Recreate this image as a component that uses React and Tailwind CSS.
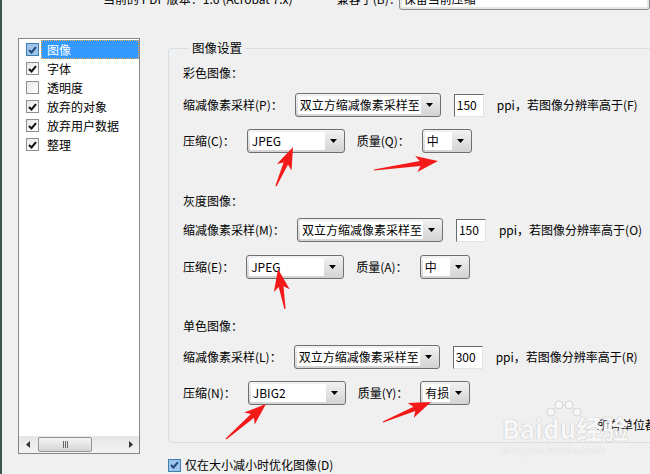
import React from 'react';

const font = "font-['Noto_Sans_CJK_SC','Liberation_Sans',sans-serif]";

const Tri = () => (
  <svg width="7" height="4" viewBox="0 0 7 4">
    <polygon points="0,0 7,0 3.5,4" fill="#000" />
  </svg>
);

const Select = ({ w, text }) => (
  <div className={`flex h-[24px] shrink-0 rounded-[3px] border border-[#707070] bg-linear-to-b from-[#f2f2f2] to-[#d3d3d3] p-[2px] ${w}`}>
    <div className="flex flex-1 items-center overflow-hidden whitespace-nowrap bg-white pl-[2px]">{text}</div>
    <div className="flex w-[17px] items-center justify-center">
      <Tri />
    </div>
  </div>
);

const Field = ({ value, w = 'w-[30px]' }) => (
  <div className={`flex h-[23px] shrink-0 items-center border border-t-[#6b6b6b] border-l-[#6b6b6b] border-r-[#e3e3e3] border-b-[#e3e3e3] bg-white pl-[2px] ${w}`}>
    {value}
  </div>
);

const Check = ({ checked, hot }) => (
  <div
    className={`flex h-[13px] w-[13px] shrink-0 items-center justify-center border ${
      hot ? 'border-[#3c7fb1] bg-[#9fc4ea]' : 'border-[#8f8f8f] bg-linear-to-br from-[#e8e8e8] to-white'
    }`}
  >
    {checked && (
      <svg width="9" height="8" viewBox="0 0 9 8">
        <path d="M1 4 L3.5 6.5 L8 1.2" fill="none" stroke={hot ? '#1d4a7a' : '#111'} strokeWidth="2" />
      </svg>
    )}
  </div>
);

const arrowPoints = (x1, y1, x2, y2) => {
  const dx = x2 - x1;
  const dy = y2 - y1;
  const L = Math.hypot(dx, dy);
  const ux = dx / L;
  const uy = dy / L;
  const px = -uy;
  const py = ux;
  const head = 18;
  const hw = 8;
  const bx = x2 - ux * head;
  const by = y2 - uy * head;
  const cx = bx - ux * 4;
  const cy = by - uy * 4;
  const p = [
    [x1 + px * 0.6, y1 + py * 0.6],
    [bx + px * 2.4, by + py * 2.4],
    [cx + px * hw, cy + py * hw],
    [x2, y2],
    [cx - px * hw, cy - py * hw],
    [bx - px * 2.4, by - py * 2.4],
    [x1 - px * 0.6, y1 - py * 0.6],
  ];
  return p.map((q) => q.map((n) => n.toFixed(1)).join(',')).join(' ');
};

const arrows = [
  [276, 186, 293, 147],
  [374, 170, 438, 161],
  [285, 309, 278, 269],
  [226, 439, 266, 404],
  [383, 422, 431, 402],
];

const items = [
  { label: '图像', checked: true, selected: true },
  { label: '字体', checked: true },
  { label: '透明度', checked: false },
  { label: '放弃的对象', checked: true },
  { label: '放弃用户数据', checked: true },
  { label: '整理', checked: true },
];

const Section = ({ title, letter, ppi, after, comp, compLetter, qLetter, quality, gaps }) => (
  <>
    <div className={gaps[0]}>{title}</div>
    <div className={`flex items-center ${gaps[1]}`}>
      <span className="whitespace-nowrap">缩减像素采样({letter})：</span>
      <div className="ml-[12px]">
        <Select w="w-[146px]" text="双立方缩减像素采样至" />
      </div>
      <div className="ml-[13px]">
        <Field value={ppi} />
      </div>
      <span className="ml-[13px] whitespace-nowrap">ppi，若图像分辨率高于({after})</span>
      {after !== 'O' && (
        <div className="ml-[13px]">
          <Field value="" w="w-[40px]" />
        </div>
      )}
    </div>
    <div className={`flex items-center ${gaps[2]}`}>
      <span className="whitespace-nowrap">压缩({compLetter})：</span>
      <div className="ml-[12px]">
        <Select w="w-[98px]" text={comp} />
      </div>
      <span className="ml-[12px] whitespace-nowrap">质量({qLetter})：</span>
      <div className="ml-[12px]">
        <Select w="w-[50px]" text={quality} />
      </div>
    </div>
  </>
);

export default function App() {
  return (
    <div className={`relative h-[474px] w-[650px] overflow-hidden border-l-2 border-[#3d564c] bg-[#f0f0f0] text-[12px] leading-[16px] text-black ${font}`}>
      {/* top row, cut off by the window edge */}
      <div className="flex h-[38px] items-start">
        <div className="ml-[101px] -mt-[9px] w-[242px] whitespace-nowrap">当前的 PDF 版本：1.6 (Acrobat 7.x)</div>
        <div className="-mt-[9px] w-[62px] whitespace-nowrap">兼容于(B)：</div>
        <div className="-mt-[14px] flex h-[24px] w-[260px] rounded-[3px] border border-[#8a8a8a] bg-[#e6e6e6] p-[2px]">
          <div className="flex-1 bg-white pl-[2px] leading-[20px]">保留当前压缩</div>
        </div>
      </div>

      <div className="flex items-start pl-[16px]">
        {/* left list */}
        <div className="flex h-[416px] w-[122px] shrink-0 flex-col border border-[#828790] bg-white">
          <div className="flex-1 pt-[1px]">
            {items.map((it) => (
              <div key={it.label} className="flex h-[19px] items-center pl-[7px]">
                <Check checked={it.checked} hot={it.selected} />
                <div
                  className={`ml-[2px] flex h-[19px] flex-1 items-center whitespace-nowrap ${
                    it.selected ? 'border border-dotted border-[#ffae5c] bg-[#3399ff] pl-[5px] text-white' : 'pl-[6px]'
                  }`}
                >
                  {it.label}
                </div>
              </div>
            ))}
          </div>
          <div className="flex h-[17px] items-center bg-linear-to-b from-[#e6e6e6] to-[#f3f3f3]">
            <div className="flex w-[17px] items-center justify-center">
              <svg width="4" height="7" viewBox="0 0 4 7">
                <polygon points="4,0 4,7 0,3.5" fill="#333" />
              </svg>
            </div>
            <div className="ml-[2px] flex h-[15px] w-[54px] items-center justify-center gap-[1px] rounded-[2px] border border-[#979797] bg-linear-to-b from-[#f4f4f4] to-[#d6d6d6]">
              <span className="h-[7px] w-[1px] bg-[#666]" />
              <span className="h-[7px] w-[1px] bg-[#666]" />
              <span className="h-[7px] w-[1px] bg-[#666]" />
            </div>
            <div className="flex-1" />
            <div className="flex w-[17px] items-center justify-center">
              <svg width="4" height="7" viewBox="0 0 4 7">
                <polygon points="0,0 0,7 4,3.5" fill="#333" />
              </svg>
            </div>
          </div>
        </div>

        {/* right column */}
        <div className="ml-[28px] mt-[2px] w-[520px] shrink-0">
          <fieldset className="h-[403px] rounded-[3px] border border-[#d5dfe5] pl-[14px]">
            <legend className="ml-[6px] px-[3px] text-[12.5px]">图像设置</legend>
            <Section
              title="彩色图像："
              letter="P"
              ppi="150"
              after="F"
              comp="JPEG"
              compLetter="C"
              qLetter="Q"
              quality="中"
              gaps={['mt-[9px]', 'mt-[12px]', 'mt-[12px]']}
            />
            <Section
              title="灰度图像："
              letter="M"
              ppi="150"
              after="O"
              comp="JPEG"
              compLetter="E"
              qLetter="A"
              quality="中"
              gaps={['mt-[40px]', 'mt-[9px]', 'mt-[13px]']}
            />
            <Section
              title="单色图像："
              letter="L"
              ppi="300"
              after="R"
              comp="JBIG2"
              compLetter="N"
              qLetter="Y"
              quality="有损"
              gaps={['mt-[39px]', 'mt-[11px]', 'mt-[12px]']}
            />
            <div className="mt-[12px] whitespace-nowrap pl-[414px]">所有单位都是以像素为单位</div>
          </fieldset>
          <div className="mt-[14px] flex items-center">
            <Check checked hot />
            <span className="ml-[4px] whitespace-nowrap">仅在大小减小时优化图像(D)</span>
          </div>
        </div>
      </div>

      {/* watermark */}
      <div className="pointer-events-none absolute left-[500px] top-[400px] flex flex-col items-start text-[#f7f7f7]">
        <svg className="ml-[43px]" width="38" height="20" viewBox="0 0 38 20">
          {[
            [6, 12, 4],
            [14, 5, 4],
            [24, 5, 4],
            [32, 12, 4],
          ].map(([cx, cy, r]) => (
            <circle key={cx} cx={cx} cy={cy} r={r} fill="#f7f7f7" stroke="#d4d4d4" strokeWidth="1" />
          ))}
        </svg>
        <div className="-mt-[4px] text-[26px] font-semibold leading-[24px] [text-shadow:0_0_1px_#bdbdbd,0_0_1px_#bdbdbd]">Baidu经验</div>
        <div className="mt-[2px] text-[12px] leading-[14px] [text-shadow:0_0_1px_#c4c4c4]">jingyan.baidu.com</div>
      </div>

      {/* red annotation arrows */}
      <svg className="pointer-events-none absolute left-0 top-0" width="650" height="474">
        {arrows.map((a, i) => (
          <polygon key={i} points={arrowPoints(a[0] - 2, a[1], a[2] - 2, a[3])} fill="#f41a1a" />
        ))}
      </svg>
    </div>
  );
}
